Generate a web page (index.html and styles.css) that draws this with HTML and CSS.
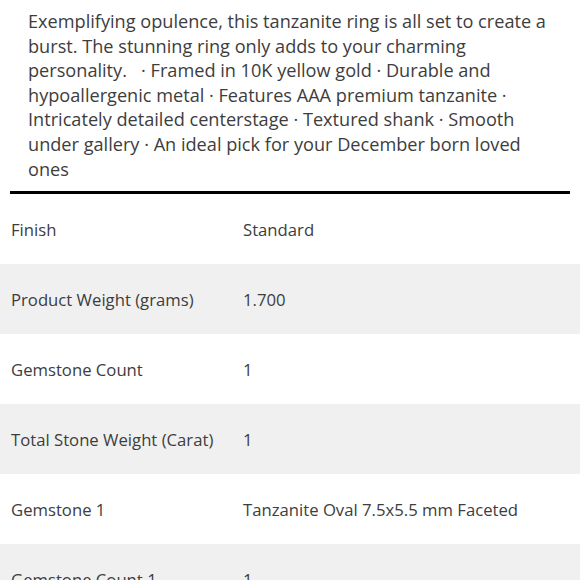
FILE: index.html
```html
<!DOCTYPE html>
<html>
<head>
<meta charset="utf-8">
<link rel="stylesheet" href="styles.css">
</head>
<body>
<div class="page">
  <p class="desc">Exemplifying opulence, this tanzanite ring is all set to create a burst. The stunning ring only adds to your charming personality. &nbsp;&nbsp;· Framed in 10K yellow gold · Durable and hypoallergenic metal · Features AAA premium tanzanite · Intricately detailed centerstage · Textured shank · Smooth under gallery · An ideal pick for your December born loved ones</p>
  <div class="specs">
    <div class="row"><div class="label">Finish</div><div class="value">Standard</div></div>
    <div class="row alt"><div class="label">Product Weight (grams)</div><div class="value">1.700</div></div>
    <div class="row"><div class="label">Gemstone Count</div><div class="value">1</div></div>
    <div class="row alt"><div class="label">Total Stone Weight (Carat)</div><div class="value">1</div></div>
    <div class="row"><div class="label">Gemstone 1</div><div class="value">Tanzanite Oval 7.5x5.5 mm Faceted</div></div>
    <div class="row alt"><div class="label">Gemstone Count 1</div><div class="value">1</div></div>
  </div>
</div>
</body>
</html>
```

FILE: styles.css
```css
html, body {
  margin: 0;
  padding: 0;
  background: #ffffff;
}
body {
  font-family: "Open Sans", "Liberation Sans", sans-serif;
  color: #3d3d3d;
}
.page {
  width: 580px;
}
.desc {
  margin: 0 10px;
  padding: 9px 16px 10px 18px;
  font-size: 18.15px;
  line-height: 24.6px;
  border-bottom: 3px solid #000000;
}
.specs {
  display: flex;
  flex-direction: column;
}
.row {
  display: grid;
  grid-template-columns: 232px 1fr;
  height: 70px;
  align-items: center;
  padding-left: 11px;
  font-size: 16.7px;
}
.row.alt {
  background: #f0f0f0;
}
```
